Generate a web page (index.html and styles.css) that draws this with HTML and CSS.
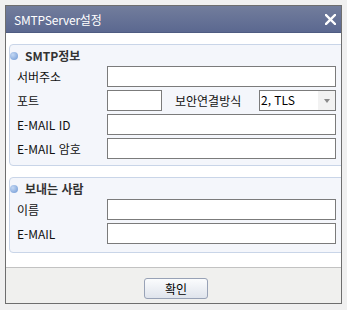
FILE: index.html
```html
<!DOCTYPE html>
<html lang="ko">
<head>
    <meta charset="UTF-8">
    <title>SMTPServer설정</title>
    <link rel="stylesheet" href="styles.css">
</head>
<body>

<div class="dialog">
    <div class="titlebar">
        <span class="title">SMTPServer설정</span>
        <svg class="close" width="11" height="11" viewBox="0 0 11 11">
            <path d="M1 1 L10 10 M10 1 L1 10" stroke="#fff" stroke-width="2.4" stroke-linecap="square"/>
        </svg>
    </div>

    <div class="content">
        <div class="panel first">
            <div class="panel-head"><span class="dot"></span>SMTP정보</div>
            <div class="row">
                <label>서버주소</label>
                <input type="text" class="wide">
            </div>
            <div class="row">
                <label>포트</label>
                <input type="text" class="port">
                <label class="sec-label">보안연결방식</label>
                <div class="select">
                    <span class="select-value">2, TLS</span>
                    <span class="select-arrow"></span>
                </div>
            </div>
            <div class="row">
                <label>E-MAIL ID</label>
                <input type="text" class="wide">
            </div>
            <div class="row">
                <label>E-MAIL 암호</label>
                <input type="password" class="wide">
            </div>
        </div>

        <div class="panel second">
            <div class="panel-head"><span class="dot"></span>보내는 사람</div>
            <div class="row">
                <label>이름</label>
                <input type="text" class="wide">
            </div>
            <div class="row">
                <label>E-MAIL</label>
                <input type="text" class="wide">
            </div>
        </div>
    </div>

    <div class="footer">
        <button type="button">확인</button>
    </div>
</div>

</body>
</html>
```

FILE: styles.css
```css
* {
    box-sizing: border-box;
    margin: 0;
    padding: 0;
    font-family: "Noto Sans CJK KR", "Noto Sans", sans-serif;
}

body {
    background-color: #f0f0f0;
    padding: 5px;
    width: 347px;
    height: 310px;
    overflow: hidden;
}

.dialog {
    width: 337px;
    height: 299px;
    border: 1px solid #6e6e6e;
    background-color: #fff;
    overflow: hidden;
    display: flex;
    flex-direction: column;
}

.titlebar {
    height: 27px;
    background: linear-gradient(#727d9c, #5b6890);
    border-bottom: 1px solid #4f5c82;
    display: flex;
    align-items: center;
    justify-content: space-between;
    padding: 0 5px 0 8px;
}

.title {
    color: #fff;
    font-size: 12px;
    letter-spacing: -0.2px;
}

.close {
    display: block;
}

.content {
    height: 235px;
    border-bottom: 1px solid #c2c2c2;
    padding-top: 11px;
}

.panel {
    margin-left: 3px;
    width: 340px;
    border: 1px solid #c9d5e8;
    border-radius: 4px;
    background-color: #f4f6fb;
    padding: 0 0 0 7px;
}

.panel.first {
    height: 122px;
}

.panel.second {
    margin-top: 11px;
    height: 76px;
}

.panel-head {
    height: 21px;
    display: flex;
    align-items: center;
    margin-left: -7px;
    font-size: 12px;
    font-weight: bold;
    color: #333;
}

.dot {
    width: 8px;
    height: 8px;
    border-radius: 50%;
    background: radial-gradient(circle at 35% 35%, #c4d8f4, #6d97d3);
    margin: 0 7px 0 0;
}

.row {
    display: flex;
    align-items: center;
    height: 21px;
    margin-bottom: 3px;
}

.row label {
    width: 90px;
    font-size: 12px;
    color: #111;
}

.row .sec-label {
    width: auto;
    margin: 0 0 0 13px;
    flex: 0 0 84px;
}

input[type="text"], input[type="password"] {
    height: 21px;
    border: 1px solid #7b7b7b;
    background-color: #fff;
    font-size: 12px;
    outline: none;
}

.wide {
    width: 229px;
}

.port {
    width: 55px;
}

.select {
    width: 77px;
    height: 21px;
    border: 1px solid #7b7b7b;
    background-color: #fff;
    display: flex;
}

.select-value {
    flex: 1;
    font-size: 12px;
    line-height: 17px;
    padding-left: 1px;
    color: #000;
}

.select-arrow {
    width: 17px;
    background-color: #f2f2f2;
    position: relative;
}

.select-arrow::after {
    content: "";
    position: absolute;
    left: 6px;
    top: 8px;
    border-left: 3px solid transparent;
    border-right: 3px solid transparent;
    border-top: 4px solid #8a8a8a;
}

.footer {
    flex: 1;
    background-color: #f0f0ee;
    display: flex;
    justify-content: center;
    padding-top: 10px;
    padding-left: 5px;
}

button {
    width: 64px;
    height: 21px;
    border: 1px solid #98a2b6;
    border-radius: 3px;
    background: linear-gradient(#fbfcfd, #dfe4ec);
    font-size: 12px;
    color: #000;
}
```
